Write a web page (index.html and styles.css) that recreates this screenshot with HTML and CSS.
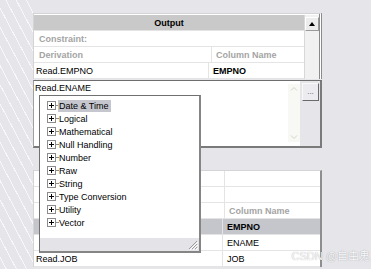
FILE: index.html
```html
<!DOCTYPE html>
<html lang="en">
<head>
<meta charset="UTF-8">
<title>Output Mapping</title>
<link rel="stylesheet" href="styles.css">
</head>
<body>
<div class="screen">
    <div class="main">
        <div class="panel panel-top">
            <div class="grid">
                <div class="row head">Output</div>
                <div class="row"><span class="cell label pad5">Constraint:</span></div>
                <div class="row">
                    <span class="cell col-a label pad5">Derivation</span>
                    <span class="cell label">Column Name</span>
                </div>
                <div class="row">
                    <span class="cell col-a pad2">Read.EMPNO</span>
                    <span class="cell bold">EMPNO</span>
                </div>
            </div>
            <div class="vscroll">
                <div class="scroll-btn"><span class="tri-up"></span></div>
            </div>
        </div>

        <div class="editor">
            <div class="edit-field">
                <div class="edit-text">Read.ENAME</div>
                <div class="edit-scroll">
                    <svg width="12" height="10" viewBox="0 0 12 10"><path d="M3 6.5 L6 3.5 L9 6.5" fill="none" stroke="#d4d4cc" stroke-width="1"/></svg>
                    <svg width="12" height="10" viewBox="0 0 12 10"><path d="M3 3.5 L6 6.5 L9 3.5" fill="none" stroke="#d4d4cc" stroke-width="1"/></svg>
                </div>
            </div>
            <div class="edit-side">
                <div class="dots">...</div>
            </div>
        </div>

        <div class="panel panel-bottom">
            <div class="row"><span class="cell col-b"></span><span class="cell"></span></div>
            <div class="row"><span class="cell col-b"></span><span class="cell"></span></div>
            <div class="row"><span class="cell col-b label"></span><span class="cell label">Column Name</span></div>
            <div class="row selected"><span class="cell col-b pad2"></span><span class="cell bold">EMPNO</span></div>
            <div class="row"><span class="cell col-b pad2"></span><span class="cell">ENAME</span></div>
            <div class="row"><span class="cell col-b pad2">Read.JOB</span><span class="cell">JOB</span></div>
        </div>
    </div>

    <div class="dropdown">
        <ul class="tree">
            <li><span class="box"></span><span class="stem"></span><span class="name current">Date &amp; Time</span></li>
            <li><span class="box"></span><span class="stem"></span><span class="name">Logical</span></li>
            <li><span class="box"></span><span class="stem"></span><span class="name">Mathematical</span></li>
            <li><span class="box"></span><span class="stem"></span><span class="name">Null Handling</span></li>
            <li><span class="box"></span><span class="stem"></span><span class="name">Number</span></li>
            <li><span class="box"></span><span class="stem"></span><span class="name">Raw</span></li>
            <li><span class="box"></span><span class="stem"></span><span class="name">String</span></li>
            <li><span class="box"></span><span class="stem"></span><span class="name">Type Conversion</span></li>
            <li><span class="box"></span><span class="stem"></span><span class="name">Utility</span></li>
            <li><span class="box"></span><span class="stem"></span><span class="name">Vector</span></li>
        </ul>
        <div class="drop-foot">
            <svg class="grip" width="10" height="10" viewBox="0 0 10 10">
                <path d="M9 1 L1 9 M9 4 L4 9 M9 7 L7 9" stroke="#9a9a9a" stroke-width="1"/>
                <path d="M10 2 L2 10 M10 5 L5 10 M10 8 L8 10" stroke="#ffffff" stroke-width="1"/>
            </svg>
        </div>
    </div>

    <div class="watermark">CSDN @自由鬼</div>
</div>
</body>
</html>
```

FILE: styles.css
```css
body {
    margin: 0;
    font-family: "Liberation Sans", Arial, sans-serif;
    font-size: 9px;
    color: #000;
}
.screen {
    position: relative;
    width: 371px;
    height: 269px;
    overflow: hidden;
    background:
        repeating-linear-gradient(62deg, transparent 0 5px, rgba(255,255,255,0.75) 5px 6px, transparent 6px 9px) 0 0 / 33px 269px no-repeat,
        #e5e5ea;
}
.main {
    margin-left: 33px;
    width: 289px;
    padding-top: 13px;
    display: flex;
    flex-direction: column;
}

/* grids */
.panel {
    background: #fff;
    border-top: 1px solid #d4d4d4;
    border-left: 1px solid #d4d4d4;
}
.panel-top {
    display: flex;
    padding-top: 1px;
    border-right: 3px double #8a8a8a;
}
.grid {
    flex: 1;
}
.row {
    display: flex;
    align-items: center;
    height: 15px;
    border-bottom: 1px solid #e4e4e4;
}
.row.head {
    justify-content: center;
    background: #c9c9c9;
    font-weight: bold;
}
.cell {
    display: flex;
    align-items: center;
    height: 100%;
    padding-left: 4px;
    white-space: nowrap;
}
.col-a {
    width: 172px;
    border-right: 1px solid #e4e4e4;
}
.col-b {
    width: 186px;
    border-right: 1px solid #e4e4e4;
}
.pad5 {
    padding-left: 5px;
}
.pad2 {
    padding-left: 2px;
}
.label {
    color: #a4a4a4;
    font-weight: bold;
}
.bold {
    font-weight: bold;
}
.vscroll {
    width: 14px;
    background: #f1f1f1;
    border-left: 1px solid #d8d8d8;
}
.scroll-btn {
    height: 12px;
    margin-top: 2px;
    display: flex;
    align-items: center;
    justify-content: center;
    background: #ececec;
    border: 1px solid;
    border-color: #ffffff #9a9a9a #9a9a9a #ffffff;
}
.tri-up {
    width: 0;
    height: 0;
    border-left: 3px solid transparent;
    border-right: 3px solid transparent;
    border-bottom: 4px solid #000;
}

/* expression editor */
.editor {
    display: flex;
    height: 65px;
    margin-top: 1px;
    border-top: 1px solid #6e6e6e;
    border-left: 1px solid #a0a0a0;
    border-right: 2px solid #7a7a7a;
    border-bottom: 2px solid #7a7a7a;
    background: #e5e5ea;
}
.edit-field {
    flex: 1;
    display: flex;
    background: #fff;
}
.edit-text {
    flex: 1;
    padding: 2px 1px;
}
.edit-scroll {
    width: 12px;
    margin: 3px 0 4px;
    background: #f8f8f4;
    display: flex;
    flex-direction: column;
    justify-content: space-between;
}
.edit-scroll svg {
    display: block;
}
.edit-side {
    width: 20px;
    padding: 2px 1px 0 2px;
    box-sizing: border-box;
}
.dots {
    height: 16px;
    display: flex;
    justify-content: center;
    align-items: center;
    background: #ececf0;
    border: 1px solid;
    border-color: #f8f8f8 #6a6a6a #6a6a6a #f8f8f8;
    color: #555;
    font-size: 8px;
    line-height: 8px;
}

.panel-bottom {
    margin-top: 22px;
    border-right: 2px solid #8e8e8e;
}
.panel-bottom .row.selected {
    background: #c5c5cc;
}

/* function tree popup */
.dropdown {
    position: absolute;
    left: 39px;
    top: 95px;
    width: 159px;
    height: 155px;
    display: flex;
    flex-direction: column;
    background: #fff;
    border-top: 1px solid #707070;
    border-left: 1px solid #707070;
    border-right: 2px solid #858585;
    border-bottom: 2px solid #858585;
}
.tree {
    flex: 1;
    list-style: none;
    margin: 0;
    padding: 3px 0 0 7px;
}
.tree li {
    display: flex;
    align-items: center;
    height: 13px;
}
.box {
    position: relative;
    width: 7px;
    height: 7px;
    border: 1px solid #8c8c8c;
    background: #fff;
}
.box::before,
.box::after {
    content: "";
    position: absolute;
    background: #000;
}
.box::before {
    left: 1px;
    top: 3px;
    width: 5px;
    height: 1px;
}
.box::after {
    left: 3px;
    top: 1px;
    width: 1px;
    height: 5px;
}
.stem {
    width: 2px;
    border-top: 1px dotted #8c8c8c;
}
.name {
    padding: 1px 2px 1px 1px;
}
.name.current {
    background: #c6c6ce;
}
.drop-foot {
    height: 13px;
    display: flex;
    justify-content: flex-end;
    align-items: flex-end;
    background: #e3e3e8;
}
.grip {
    display: block;
    margin: 0 1px 1px 0;
}

.watermark {
    position: absolute;
    right: 1px;
    bottom: 6px;
    font-family: "Liberation Sans", "Noto Sans CJK SC", sans-serif;
    font-size: 11px;
    color: #fafafc;
    text-shadow: 0 0 1px rgba(0,0,0,0.4);
}
```
